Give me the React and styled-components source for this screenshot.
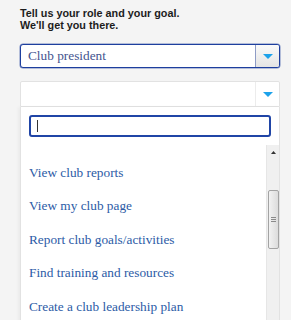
import React from 'react';
import styled, { createGlobalStyle } from 'styled-components';

const GlobalStyle = createGlobalStyle`
  html, body {
    margin: 0;
    padding: 0;
    background: #f4f4f4;
    overflow: hidden;
  }
`;

const Page = styled.div`
  width: 291px;
  height: 320px;
  padding: 7px 0 0 20px;
  box-sizing: border-box;
  overflow: hidden;
`;

const Heading = styled.div`
  font-family: "Liberation Sans", Arial, sans-serif;
  font-weight: bold;
  font-size: 10.8px;
  line-height: 12px;
  color: #1c1c1c;
`;

const Column = styled.div`
  width: 260px;
  display: flex;
  flex-direction: column;
`;

const Select = styled.div`
  margin-top: ${p => p.$gap}px;
  height: ${p => p.$h}px;
  box-sizing: border-box;
  display: flex;
  align-items: stretch;
  background: #fff;
  border: 1px solid ${p => (p.$active ? '#1e3f9e' : '#e2e2e2')};
  border-radius: ${p => (p.$active ? '3px' : '2px 2px 0 0')};
  box-shadow: ${p => (p.$active ? '0 0 0.5px 0.5px rgba(30,63,158,0.6)' : 'none')};
`;

const Value = styled.div`
  flex: 1;
  display: flex;
  align-items: center;
  padding-left: 7px;
  font-family: "Liberation Serif", "Times New Roman", serif;
  font-size: 13.3px;
  color: #44548f;
`;

const ArrowButton = styled.div`
  width: 23px;
  display: flex;
  align-items: center;
  justify-content: center;
  border-left: 1px solid ${p => (p.$active ? '#8e9cc6' : '#ececec')};
  background: ${p => (p.$active ? 'linear-gradient(#fafafa, #e4e4e4)' : '#fff')};
  border-radius: 0 2px 2px 0;
`;

const Triangle = () => (
  <svg width="10" height="5" viewBox="0 0 10 5">
    <path d="M0 0 H10 L5 5 Z" fill="#1da2ea" />
  </svg>
);

const Panel = styled.div`
  background: #fff;
  border: 1px solid #e2e2e2;
  border-top: none;
  padding: 8px 0 0 8px;
  display: flex;
  flex-direction: column;
  box-shadow: -2px 0 3px rgba(0, 0, 0, 0.04);
`;

const SearchBox = styled.div`
  width: 242px;
  height: 22px;
  box-sizing: border-box;
  border: 2px solid #2045a6;
  border-radius: 3px;
  display: flex;
  align-items: center;
  padding-left: 6px;
`;

const Caret = styled.span`
  width: 1px;
  height: 12px;
  background: #333;
`;

const ScrollArea = styled.div`
  margin-top: 8px;
  height: 200px;
  display: flex;
`;

const List = styled.ul`
  flex: 1;
  margin: 0;
  padding: 11px 0 0 0;
  list-style: none;
`;

const Item = styled.li`
  height: 33.5px;
  display: flex;
  align-items: center;
  font-family: "Liberation Serif", "Times New Roman", serif;
  font-size: 13.3px;
  color: #2c5ba6;
  white-space: nowrap;
`;

const Scrollbar = styled.div`
  width: 12px;
  background: #f0f0f0;
  border-left: 1px solid #e6e6e6;
  display: flex;
  flex-direction: column;
  align-items: center;
`;

const ScrollUp = styled.div`
  height: 14px;
  display: flex;
  align-items: center;
  justify-content: center;
`;

const Thumb = styled.div`
  margin-top: 31px;
  width: 11px;
  height: 59px;
  box-sizing: border-box;
  border: 1px solid #a3a3a3;
  border-radius: 2px;
  background: linear-gradient(90deg, #f2f2f2, #dcdcdc);
  display: flex;
  flex-direction: column;
  align-items: center;
  justify-content: center;
  gap: 1px;
`;

const Grip = styled.span`
  width: 5px;
  height: 1px;
  background: #8a8a8a;
`;

const items = [
  'View club reports',
  'View my club page',
  'Report club goals/activities',
  'Find training and resources',
  'Create a club leadership plan',
];

export default function App() {
  return (
    <>
      <GlobalStyle />
      <Page>
        <Heading>
          Tell us your role and your goal.
          <br />
          We'll get you there.
        </Heading>
        <Column>
          <Select $active $gap={13} $h={24}>
            <Value>Club president</Value>
            <ArrowButton $active>
              <Triangle />
            </ArrowButton>
          </Select>
          <Select $gap={13} $h={26}>
            <Value />
            <ArrowButton>
              <Triangle />
            </ArrowButton>
          </Select>
          <Panel>
            <SearchBox>
              <Caret />
            </SearchBox>
            <ScrollArea>
              <List>
                {items.map(t => (
                  <Item key={t}>{t}</Item>
                ))}
              </List>
              <Scrollbar>
                <ScrollUp>
                  <svg width="5" height="3" viewBox="0 0 5 3">
                    <path d="M0 3 H5 L2.5 0 Z" fill="#333" />
                  </svg>
                </ScrollUp>
                <Thumb>
                  <Grip />
                  <Grip />
                  <Grip />
                </Thumb>
              </Scrollbar>
            </ScrollArea>
          </Panel>
        </Column>
      </Page>
    </>
  );
}
